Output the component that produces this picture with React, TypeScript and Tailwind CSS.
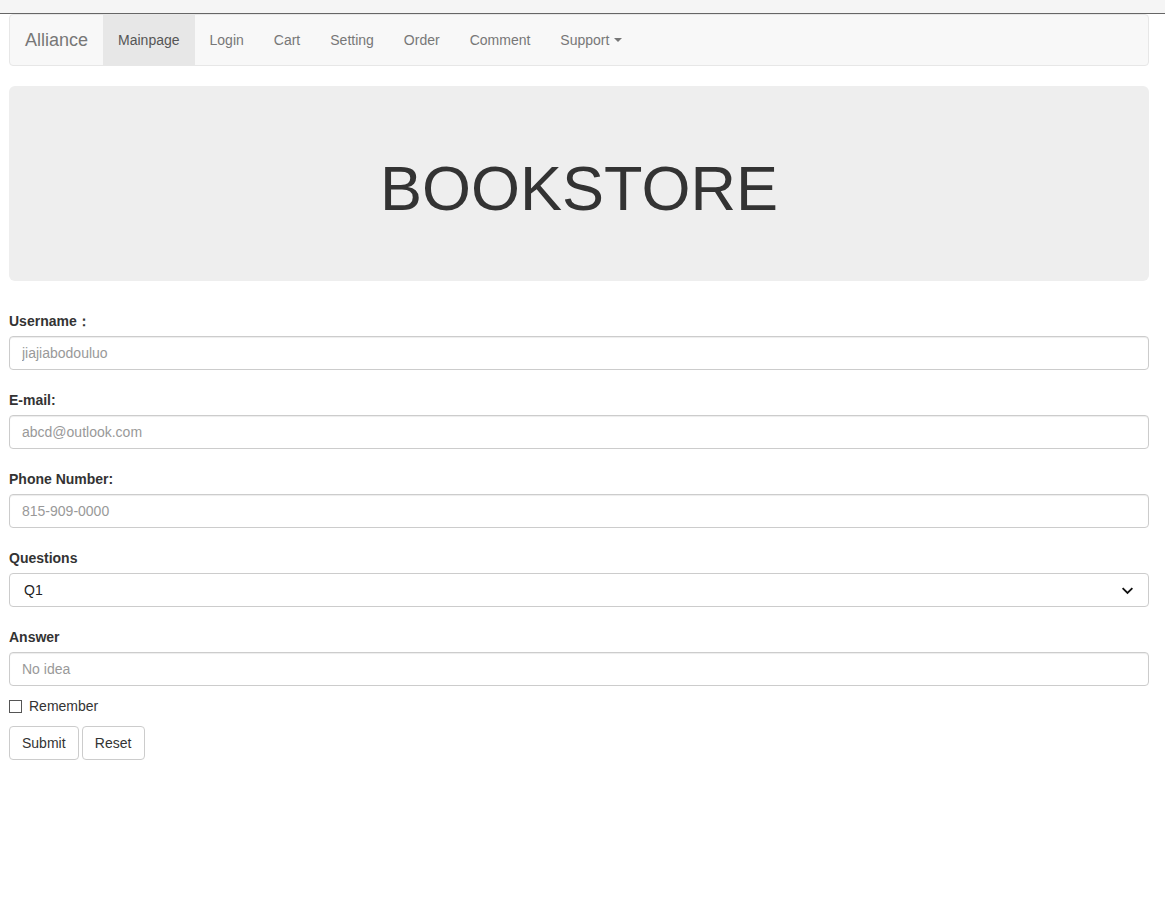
import React from 'react';

const navLinks = ['Mainpage', 'Login', 'Cart', 'Setting', 'Order', 'Comment'];

const Field = ({ label, placeholder }: { label: string; placeholder: string }) => (
  <div className="flex flex-col">
    <label className="mb-[5px] h-5 text-[14px] leading-5 font-bold text-[#333]">{label}</label>
    <input
      className="h-[34px] w-full rounded-[4px] border border-[#ccc] bg-white px-3 text-[14px] text-[#555] placeholder:text-[#999] shadow-[inset_0_1px_1px_rgba(0,0,0,0.075)] outline-none"
      placeholder={placeholder}
    />
  </div>
);

export default function App() {
  return (
    <div className="min-h-[922px] bg-white font-['Liberation_Sans',Arial,sans-serif] text-[14px] text-[#333]">
      <div className="h-[14px] border-b border-[#666] bg-[#f5f5f5]" />
      <div className="w-[1140px] pl-[9px] box-content">
        {/* navbar */}
        <nav className="mb-5 flex h-[52px] items-stretch rounded-[4px] border border-[#e7e7e7] bg-[#f8f8f8]">
          <span className="flex items-center px-[15px] text-[18px] text-[#777]">Alliance</span>
          {navLinks.map((l, i) => (
            <span
              key={l}
              className={`flex items-center px-[15px] text-[14px] ${i === 0 ? 'bg-[#e7e7e7] text-[#555]' : 'text-[#777]'}`}
            >
              {l}
            </span>
          ))}
          <span className="flex items-center px-[15px] text-[14px] text-[#777]">
            Support
            <span className="ml-[5px] inline-block h-0 w-0 border-x-4 border-t-4 border-x-transparent border-t-[#777]" />
          </span>
        </nav>

        {/* jumbotron */}
        <div className="mb-[30px] rounded-[6px] bg-[#eee] px-[60px] py-12">
          <h1 className="mt-5 mb-[10px] text-center text-[63px] leading-[1.1] font-normal text-[#333]">BOOKSTORE</h1>
        </div>

        {/* form */}
        <form className="flex flex-col">
          <div className="flex flex-col gap-5">
            <Field label="Username：" placeholder="jiajiabodouluo" />
            <Field label="E-mail:" placeholder="abcd@outlook.com" />
            <Field label="Phone Number:" placeholder="815-909-0000" />
            <div className="flex flex-col">
              <label className="mb-[5px] h-5 text-[14px] leading-5 font-bold text-[#333]">Questions</label>
              <div className="relative">
                <select className="h-[34px] w-full appearance-none rounded-[4px] border border-[#ccc] bg-white pl-[14px] text-[14px] text-[#222] outline-none">
                  <option>Q1</option>
                  <option>Q2</option>
                  <option>Q3</option>
                </select>
                <svg
                  className="pointer-events-none absolute right-[15px] top-[11px]"
                  width="13"
                  height="13"
                  viewBox="0 0 16 16"
                  fill="none"
                  stroke="#111"
                  strokeWidth="2.2"
                >
                  <path d="M2 5l6 6 6-6" />
                </svg>
              </div>
            </div>
            <Field label="Answer" placeholder="No idea" />
          </div>
          <div className="my-[10px] flex h-5 items-center">
            <span className="ml-0 inline-block h-[13px] w-[13px] border border-[#555] bg-white" />
            <span className="ml-[7px] text-[14px] text-[#333]">Remember</span>
          </div>
          <div className="flex gap-[3px]">
            <button type="button" className="h-[34px] rounded-[4px] border border-[#ccc] bg-white px-3 text-[14px] text-[#333]">
              Submit
            </button>
            <button type="button" className="h-[34px] w-[63px] rounded-[4px] border border-[#ccc] bg-white px-3 text-[14px] text-[#333]">
              Reset
            </button>
          </div>
        </form>
      </div>
    </div>
  );
}
